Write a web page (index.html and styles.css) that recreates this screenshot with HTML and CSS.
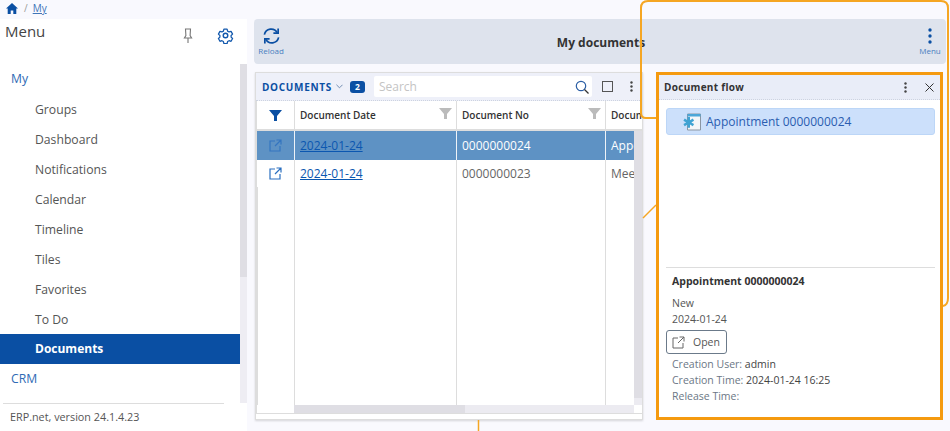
FILE: index.html
```html
<!DOCTYPE html>
<html lang="en">
<head>
  <meta charset="UTF-8">
  <meta name="viewport" content="width=device-width, initial-scale=1.0">
  <title>My documents</title>
  <link rel="stylesheet" href="styles.css">
</head>
<body>
  <nav class="crumbs">
    <svg class="home" viewBox="0 0 12 11" width="12" height="11"><path d="M6 0 0 5.6h1.7V11h3V7.4h2.6V11h3V5.6H12z"/></svg>
    <span class="slash">/</span>
    <a class="crumb-link" href="#">My</a>
  </nav>

  <div class="app">
    <aside class="sidebar">
      <header class="side-head">
        <span class="side-title">Menu</span>
        <svg class="pin" viewBox="0 0 10 16" width="10" height="16"><path d="M2.5 1h5l-.4 6.5L8.6 10H1.400l1.500-2.500zM5 10v5" fill="none" stroke="#777" stroke-width="1.1"/></svg>
        <svg class="gear" viewBox="0 0 24 24" width="17" height="17"><circle cx="12" cy="12" r="3.200"/><path d="M9.500 2h5l.8 3.100 2.300 1.300 3.100-.9 2.400 4.300-2.300 2.200v2.600l2.300 2.200-2.400 4.300-3.100-.9-2.300 1.300-.8 3.100h-5l-.8-3.100-2.300-1.300-3.100.9L.9 16.800l2.300-2.200v-2.600L.9 9.800l2.400-4.300 3.100.9 2.300-1.300z" transform="translate(1.200 1.200) scale(.9)" stroke-linejoin="round"/></svg>
      </header>
      <div class="side-body">
        <ul class="side-list">
          <li class="side-group">My</li>
          <li class="side-item">Groups</li>
          <li class="side-item">Dashboard</li>
          <li class="side-item">Notifications</li>
          <li class="side-item">Calendar</li>
          <li class="side-item">Timeline</li>
          <li class="side-item">Tiles</li>
          <li class="side-item">Favorites</li>
          <li class="side-item">To Do</li>
          <li class="side-item active">Documents</li>
          <li class="side-group">CRM</li>
        </ul>
        <div class="side-scroll"><div class="side-thumb"></div></div>
      </div>
      <footer class="side-foot">ERP.net, version 24.1.4.23</footer>
    </aside>

    <main class="main">
      <div class="toolbar">
        <button class="tool-btn">
          <svg viewBox="0 0 20 18" width="19" height="18" fill="none" stroke="#0a4fa3" stroke-width="1.800"><path d="M2.500 7.500A7.300 7.300 0 0 1 16 5.500M17.500 10.500A7.300 7.300 0 0 1 4 12.500"/><path d="M17 1v5h-5M3 17v-5h5"/></svg>
          <span>Reload</span>
        </button>
        <h1 class="page-title">My documents</h1>
        <button class="tool-btn">
          <svg class="menu-dots" viewBox="0 0 4 16" width="4" height="16" fill="#0a4fa3"><circle cx="2" cy="2" r="1.700"/><circle cx="2" cy="8" r="1.700"/><circle cx="2" cy="14" r="1.700"/></svg>
          <span>Menu</span>
        </button>
      </div>

      <div class="content">
        <section class="card">
          <div class="card-bar">
            <span class="card-title">DOCUMENTS</span>
            <svg class="chev" viewBox="0 0 8 5" width="7" height="5"><path d="M.5.500 4 4 7.500.500" fill="none" stroke="#5f7ea8"/></svg>
            <span class="badge">2</span>
            <div class="search">
              <span class="placeholder">Search</span>
              <svg viewBox="0 0 14 14" width="14" height="14" fill="none" stroke="#333" stroke-width="1.200"><circle cx="6" cy="6" r="4.700" stroke="#2c5fa5"/><path d="m9.500 9.500 4 4"/></svg>
            </div>
            <span class="check"></span>
            <svg class="dots" viewBox="0 0 3 11" width="3" height="11" fill="#444"><circle cx="1.500" cy="1.500" r="1.200"/><circle cx="1.500" cy="5.500" r="1.200"/><circle cx="1.500" cy="9.500" r="1.200"/></svg>
          </div>
          <div class="grid-wrap">
            <div class="grid-row grid-head">
              <div class="cell icon-cell"><svg viewBox="0 0 13 11" width="13" height="11"><path d="M0 0h13L8 6v5H5V6z" fill="#0a4fa3"/></svg></div>
              <div class="cell">Document Date<svg class="col-filter" viewBox="0 0 13 11" width="13" height="11"><path d="M0 0h13L8 6v5H5V6z" fill="#bbb"/></svg></div>
              <div class="cell">Document No<svg class="col-filter" viewBox="0 0 13 11" width="13" height="11"><path d="M0 0h13L8 6v5H5V6z" fill="#bbb"/></svg></div>
              <div class="cell">Document Type</div>
            </div>
            <div class="grid-body">
              <div class="grid-main">
                <div class="grid-row data selected">
                  <div class="cell icon-cell"><svg viewBox="0 0 13 13" width="13" height="13" fill="none" stroke="#2a6fc0" stroke-width="1.200"><path d="M6 2H1v10h10V7M7.500 1H12v4.500M12 1 6 7"/></svg></div>
                  <div class="cell"><a class="doc-link" href="#">2024-01-24</a></div>
                  <div class="cell">0000000024</div>
                  <div class="cell">Appointment</div>
                </div>
                <div class="grid-row data">
                  <div class="cell icon-cell"><svg viewBox="0 0 13 13" width="13" height="13" fill="none" stroke="#2a6fc0" stroke-width="1.200"><path d="M6 2H1v10h10V7M7.500 1H12v4.500M12 1 6 7"/></svg></div>
                  <div class="cell"><a class="doc-link" href="#">2024-01-24</a></div>
                  <div class="cell">0000000023</div>
                  <div class="cell">Meeting</div>
                </div>
                <div class="grid-row filler">
                  <div class="cell"></div>
                  <div class="cell"></div>
                  <div class="cell"></div>
                  <div class="cell"></div>
                </div>
                <div class="hscroll"><div class="hthumb"></div></div>
              </div>
              <div class="vscroll"><div class="vthumb"></div></div>
            </div>
          </div>
        </section>

        <section class="flow">
          <div class="flow-head">
            <span class="flow-title">Document flow</span>
            <svg class="dots" viewBox="0 0 3 11" width="3" height="11" fill="#444"><circle cx="1.500" cy="1.500" r="1.200"/><circle cx="1.500" cy="5.500" r="1.200"/><circle cx="1.500" cy="9.500" r="1.200"/></svg>
            <svg viewBox="0 0 9 9" width="9" height="9" fill="none" stroke="#333"><path d="m.5.500 8 8M8.500.500l-8 8"/></svg>
          </div>
          <div class="flow-body">
            <div class="flow-item">
              <svg viewBox="0 0 19 18" width="19" height="18"><path d="M5.500 1h13v16h-13z" fill="#f4f6f8" stroke="#8b96a3"/><path d="M5.500 1h13v2.500h-13z" fill="#4ba6d8"/><path d="M8 4v3.200l2.800-1.600 1.300 2.200-2.800 1.600 2.800 1.600-1.300 2.200L8 11.600v3.200H5.500v-3.200l-2.800 1.600-1.300-2.200 2.800-1.600-2.800-1.600 1.300-2.200 2.800 1.600V4z" fill="#3fa3d3"/></svg>
              <span>Appointment 0000000024</span>
            </div>
            <div class="details">
              <h2 class="details-title">Appointment 0000000024</h2>
              <div class="details-line dark first">New</div>
              <div class="details-line dark">2024-01-24</div>
              <button class="open-btn">
                <svg viewBox="0 0 13 13" width="13" height="13" fill="none" stroke="#666" stroke-width="1"><path d="M6 2H1v10h10V7M7.500 1H12v4.500M12 1 6 7"/></svg>
                <span>Open</span>
              </button>
              <div class="details-line">Creation User: <b>admin</b></div>
              <div class="details-line">Creation Time: <b>2024-01-24 16:25</b></div>
              <div class="details-line">Release Time:</div>
            </div>
          </div>
        </section>
      </div>
    </main>
  </div>

  <svg class="callout" viewBox="0 0 950 431" width="950" height="431" fill="none" stroke="#f5a623" stroke-width="2">
    <path d="M656 118H646Q641 118 641 113V8Q641 1 648 1H941Q948 1 948 8V298Q948 305 943 306"/>
    <path d="M656 205 643 218" stroke-width="1.500"/>
    <path d="M478.500 420V431" stroke-width="1.500"/>
  </svg>
</body>
</html>
```

FILE: styles.css
```css
* {
  box-sizing: border-box;
}

html,
body {
  height: 431px;
  overflow: hidden;
}

body {
  margin: 0;
  position: relative;
  background: #f9f9fe;
  color: #444;
  font-family: 'Open Sans', 'Noto Sans', sans-serif;
  font-size: 12px;
  display: flex;
  flex-direction: column;
}

/* breadcrumb */
.crumbs {
  height: 19px;
  padding: 0 0 3px 6px;
  display: flex;
  align-items: center;
  gap: 5px;
  font-size: 10px;
}

.home {
  fill: #0a4fa3;
}

.slash {
  color: #999;
  margin: 0 1px;
}

.crumb-link {
  color: #3f75b8;
  margin-left: -1px;
}

.app {
  flex: 1;
  display: flex;
  min-height: 0;
}

/* side menu */
.sidebar {
  width: 247px;
  background: #fff;
  display: flex;
  flex-direction: column;
}

.side-head {
  height: 45px;
  display: flex;
  align-items: flex-start;
  padding: 2px 13px 0 5px;
}

.side-title {
  flex: 1;
  font-size: 15px;
  color: #444;
  line-height: 20px;
}

.pin {
  margin: 7px 24px 0 0;
}

.gear {
  margin-top: 6px;
  fill: none;
  stroke: #1258ad;
  stroke-width: 2;
}

.side-body {
  height: 339px;
  display: flex;
}

.side-list {
  flex: 1;
  list-style: none;
  margin: 0;
  padding: 0;
}

.side-group,
.side-item {
  height: 30px;
  line-height: 31px;
  font-size: 12.200px;
}

.side-group {
  line-height: 30px;
  padding-left: 11px;
  color: #2f6ab5;
}

.side-item {
  padding-left: 35px;
  color: #555;
}

.side-item.active {
  background: #0a4fa3;
  color: #fff;
  font-size: 12px;
  font-weight: 700;
  line-height: 30px;
}

.side-scroll {
  width: 7px;
  background: #eeedf3;
}

.side-thumb {
  height: 213px;
  background: #dfdee4;
}

.side-foot {
  margin: 0 23px 0 3px;
  padding-left: 7px;
  flex: 1;
  border-top: 1px solid #ddd;
  line-height: 26px;
  font-size: 10.800px;
  color: #555;
}

/* main area */
.main {
  flex: 1;
  min-width: 0;
  padding: 0 4px 0 7px;
}

.toolbar {
  height: 45px;
  background: #dee3ed;
  border-radius: 4px;
  display: flex;
  align-items: flex-start;
  justify-content: space-between;
  padding: 8px 4px 0 5px;
}

.tool-btn {
  background: none;
  border: 0;
  padding: 0;
  width: 24px;
  display: flex;
  flex-direction: column;
  align-items: center;
  color: #4a7fc0;
  font-family: inherit;
  font-size: 8px;
}

.menu-dots {
  margin: 1px 0 1px;
}

.page-title {
  margin: 7px 0 0 1px;
  font-size: 12px;
  font-weight: 700;
  color: #333;
}

.content {
  display: flex;
  gap: 13px;
  margin: 8px 3px 0 1px;
  height: 348px;
}

/* documents grid */
.card {
  width: 388px;
  background: #fff;
  border: 1px solid #ddd;
  box-shadow: 0 1px 2px rgba(0, 0, 0, 0.15);
  display: flex;
  flex-direction: column;
  padding-bottom: 5px;
}

.card-bar {
  height: 28px;
  flex: none;
  background: #eef0f9;
  border-bottom: 1px dotted #cdd3e0;
  display: flex;
  align-items: center;
  padding: 0 9px 0 6px;
}

.card-title {
  font-size: 10px;
  font-weight: 700;
  letter-spacing: 0.7px;
  color: #0a4fa3;
}

.chev {
  margin-left: 4px;
}

.badge {
  margin-left: 7px;
  width: 15px;
  height: 12px;
  background: #0a4fa3;
  border-radius: 3px;
  color: #fff;
  font-size: 8.500px;
  font-weight: 700;
  line-height: 12px;
  text-align: center;
}

.search {
  margin-left: 9px;
  width: 219px;
  height: 21px;
  background: #fff;
  border-radius: 2px;
  display: flex;
  align-items: center;
  justify-content: space-between;
  padding: 0 3px 0 5px;
}

.placeholder {
  color: #c4c4c4;
}

.check {
  margin-left: 10px;
  width: 11px;
  height: 11px;
  border: 1px solid #555;
}

.card-bar .dots {
  margin-left: 17px;
}

.grid-wrap {
  flex: 1;
  min-height: 0;
  display: flex;
  flex-direction: column;
  overflow: hidden;
  border-left: 1px solid #ddd;
  border-bottom: 1px solid #ddd;
}

.grid-body {
  flex: 1;
  min-height: 0;
  display: flex;
}

.grid-main {
  width: 378px;
  display: flex;
  flex-direction: column;
  overflow: hidden;
}

.grid-row {
  display: grid;
  grid-template-columns: 37px 162px 149px 100px;
}

.cell {
  position: relative;
  padding-left: 5px;
  border-left: 1px solid #ddd;
  display: flex;
  align-items: center;
  white-space: nowrap;
  overflow: hidden;
}

.icon-cell {
  border-left: 0;
  padding: 0;
  justify-content: center;
}

.grid-head {
  height: 30px;
  flex: none;
  border-bottom: 2px solid #ddd;
  font-size: 10px;
  font-weight: 600;
  color: #333;
}

.col-filter {
  position: absolute;
  right: 4px;
  top: 7px;
}

.data {
  height: 29px;
  flex: none;
  color: #666;
}

.data + .data {
  height: 27px;
}

.selected {
  background: #5e92c4;
  color: #fff;
}

.selected .cell {
  border-left-color: #eef3f8;
}

.selected .icon-cell svg {
  opacity: 0.8;
}

.doc-link {
  color: #0b57b0;
}

.filler {
  flex: 1;
  min-height: 0;
}

.hscroll {
  height: 8px;
  flex: none;
  margin-left: 37px;
  background: #ecebf1;
}

.hthumb {
  width: 171px;
  height: 100%;
  background: #dfdee4;
}

.vscroll {
  width: 8px;
  margin-bottom: 8px;
  background: #ecebf1;
}

.vthumb {
  height: 267px;
  background: #dfdee4;
}

/* document flow panel */
.flow {
  width: 287px;
  position: relative;
  z-index: 2;
  background: #fff;
  border: 3px solid #f59a0f;
  display: flex;
  flex-direction: column;
}

.flow-head {
  height: 25px;
  flex: none;
  background: #e9edf8;
  border-bottom: 1px dotted #cdd3e0;
  display: flex;
  align-items: center;
  gap: 18px;
  padding: 0 6px 0 5px;
}

.flow-title {
  flex: 1;
  font-size: 10px;
  font-weight: 700;
  letter-spacing: 0.3px;
  color: #333;
}

.flow-body {
  flex: 1;
  display: flex;
  flex-direction: column;
  padding: 8px 5px 0 7px;
}

.flow-item {
  height: 27px;
  background: #cce0fb;
  border: 1px solid #bcd6f7;
  border-radius: 3px;
  display: flex;
  align-items: center;
  gap: 5px;
  padding-left: 15px;
  font-size: 12px;
  color: #2a5db0;
}

.details {
  margin-top: auto;
  height: 150px;
  border-top: 1px solid #ddd;
  padding-top: 5px;
  font-size: 10.500px;
  color: #6b7785;
  line-height: 16px;
}

.details-title {
  margin: 0 0 0 6px;
  font-size: 10.500px;
  font-weight: 700;
  color: #333;
}

.details-line {
  margin-left: 6px;
}

.details-line.dark {
  color: #555;
}

.details-line.first {
  margin-top: 6px;
}

.details-line b {
  font-weight: 400;
  color: #444;
}

.open-btn {
  width: 61px;
  height: 24px;
  margin: 3px 0 2px;
  background: #fff;
  border: 1px solid #6b7a8a;
  border-radius: 3px;
  display: flex;
  align-items: center;
  gap: 8px;
  padding: 0 0 0 5px;
  font-family: inherit;
  font-size: 10.500px;
  color: #555;
}

/* orange annotation lines over the page */
.callout {
  position: absolute;
  left: 0;
  top: 0;
  z-index: 1;
  pointer-events: none;
}
```
